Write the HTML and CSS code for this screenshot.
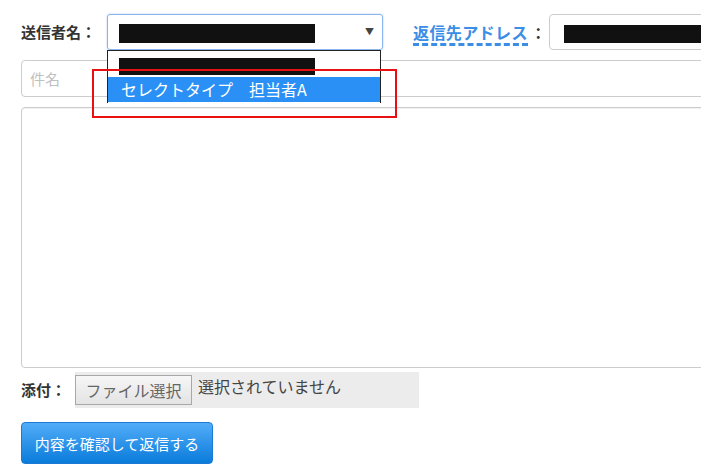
FILE: index.html
```html
<!DOCTYPE html>
<html lang="ja">
<head>
<meta charset="utf-8">
<link rel="stylesheet" href="styles.css">
</head>
<body>
<div class="form">
  <div class="row-top">
    <span class="label">送信者名：</span>
    <div class="select">
      <span class="redact redact-sel"></span>
      <span class="arrow">▼</span>
      <div class="dropdown">
        <div class="opt"><span class="redact redact-opt"></span></div>
        <div class="opt opt-active">セレクトタイプ　担当者A</div>
      </div>
    </div>
    <span class="reply-label"><a class="reply-link">返信先アドレス</a><span class="colon">：</span></span>
    <div class="text-input"><span class="redact redact-addr"></span></div>
  </div>
  <div class="subject">件名</div>
  <div class="body-area"></div>
  <div class="attach-row">
    <span class="label">添付：</span>
    <div class="file-box">
      <span class="file-btn">ファイル選択</span>
      <span class="file-none">選択されていません</span>
    </div>
  </div>
  <button class="submit">内容を確認して返信する</button>
  <div class="highlight"></div>
</div>
</body>
</html>
```

FILE: styles.css
```css
html, body {
  margin: 0;
  padding: 0;
  background: #fff;
  overflow: hidden;
  width: 701px;
  height: 467px;
}
body {
  font-family: "Noto Sans CJK JP", "Noto Sans", sans-serif;
  color: #333;
}
.form {
  position: relative;
  padding: 14px 0 0 21px;
  width: 680px;
  height: 453px;
  overflow: hidden;
}
.row-top {
  display: flex;
  align-items: center;
  height: 36px;
  white-space: nowrap;
}
.label {
  font-size: 15px;
  font-weight: bold;
  color: #333;
  width: 86px;
  flex: none;
  line-height: 20px;
  white-space: nowrap;
}
.select {
  position: relative;
  flex: none;
  width: 274px;
  height: 34px;
  border: 1px solid #8ab4f0;
  border-radius: 3px;
  box-shadow: 0 0 2px rgba(100, 150, 230, 0.5);
}
.redact {
  display: block;
  position: absolute;
  background: #111;
}
.redact-sel {
  left: 11px;
  top: 9px;
  width: 196px;
  height: 19px;
}
.arrow {
  position: absolute;
  right: 8px;
  top: 10px;
  font-size: 9px;
  color: #444;
}
.dropdown {
  position: absolute;
  left: -1px;
  top: 35px;
  width: 272px;
  height: 52px;
  border: 1px solid #222;
  border-bottom: none;
  background: #fff;
  z-index: 2;
}
.opt {
  position: relative;
  height: 25px;
  line-height: 25px;
  font-size: 16px;
  padding-left: 13px;
  margin-top: 1px;
}
.opt + .opt {
  margin-top: 0;
}
.redact-opt {
  left: 11px;
  top: 6px;
  width: 196px;
  height: 17px;
}
.opt-active {
  background: #2b90f5;
  color: #fff;
}
.reply-label {
  flex: none;
  margin-left: 30px;
  display: flex;
  align-items: center;
  font-size: 16px;
  font-weight: bold;
  white-space: nowrap;
}
.reply-link {
  color: #3a8ee6;
  border-bottom: 3px dashed #3a8ee6;
  line-height: 20px;
  padding-bottom: 1px;
  margin-top: 4px;
  letter-spacing: 0.4px;
}
.colon {
  color: #333;
  width: 21px;
  font-size: 15px;
  text-align: center;
}
.text-input {
  position: relative;
  flex: none;
  width: 200px;
  height: 34px;
  border: 1px solid #ccc;
  border-radius: 4px;
}
.redact-addr {
  left: 14px;
  top: 10px;
  width: 150px;
  height: 18px;
}
.subject {
  margin-top: 10px;
  height: 35px;
  border: 1px solid #ccc;
  border-radius: 4px;
  font-size: 15px;
  line-height: 35px;
  color: #c0c0c0;
  padding-left: 8px;
  width: 700px;
}
.body-area {
  margin-top: 10px;
  height: 259px;
  border: 1px solid #ccc;
  border-radius: 4px;
  width: 708px;
  box-shadow: inset 0 1px 1px rgba(0,0,0,0.06);
}
.attach-row {
  display: flex;
  align-items: center;
  margin-top: 4px;
  height: 36px;
}
.attach-row .label {
  width: 54px;
}
.file-box {
  display: flex;
  align-items: flex-start;
  background: #ececec;
  width: 344px;
  height: 36px;
}
.file-btn {
  margin-top: 3px;
  height: 28px;
  width: 115px;
  border: 1px solid #a8a8a8;
  background: linear-gradient(#f6f6f6, #e4e4e4);
  font-size: 16px;
  line-height: 28px;
  color: #666;
  text-align: center;
}
.file-none {
  margin-left: 6px;
  font-size: 16px;
  color: #444;
  line-height: 28px;
}
.submit {
  display: block;
  margin-top: 14px;
  width: 192px;
  height: 42px;
  border: 1px solid #1a7ad4;
  border-radius: 4px;
  background: linear-gradient(#52adf8, #0a7bdb);
  color: #fff;
  font-family: "Noto Sans CJK JP", "Noto Sans", sans-serif;
  font-size: 15px;
  padding: 0;
}
.highlight {
  position: absolute;
  left: 92px;
  top: 69px;
  width: 301px;
  height: 45px;
  border: 2px solid #e81010;
  z-index: 5;
}
```
